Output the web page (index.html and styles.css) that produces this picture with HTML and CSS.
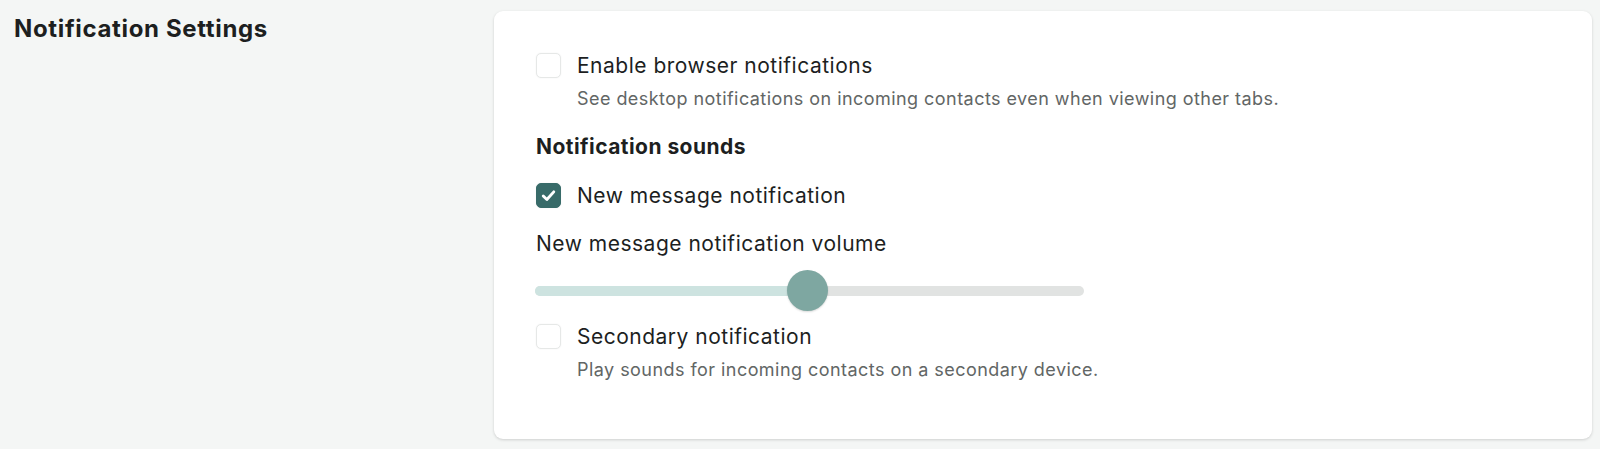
FILE: index.html
```html
<!DOCTYPE html>
<html lang="en">
<head>
  <meta charset="UTF-8">
  <meta name="viewport" content="width=device-width, initial-scale=1.0">
  <title>Notification Settings</title>
  <link rel="stylesheet" href="styles.css">
</head>
<body>
  <div class="settings">
    <h2 class="settings-title">Notification Settings</h2>

    <div class="card">
      <!-- Browser notifications -->
      <label class="option">
        <span class="checkbox"></span>
        <span class="option-label">Enable browser notifications</span>
      </label>
      <p class="hint">See desktop notifications on incoming contacts even when viewing other tabs.</p>

      <!-- Sounds -->
      <h3 class="group-title">Notification sounds</h3>
      <label class="option">
        <span class="checkbox checked">
          <svg viewBox="0 0 24 24" width="25" height="25"><polyline points="6.5,12.5 10.3,16.2 17.5,8.2" fill="none" stroke="#fff" stroke-width="3" stroke-linecap="round" stroke-linejoin="round"/></svg>
        </span>
        <span class="option-label">New message notification</span>
      </label>

      <div class="field-label">New message notification volume</div>
      <div class="slider">
        <div class="slider-track">
          <div class="slider-fill" style="width: 49.6%"></div>
        </div>
        <div class="slider-thumb" style="left: 49.6%"></div>
      </div>

      <label class="option">
        <span class="checkbox"></span>
        <span class="option-label">Secondary notification</span>
      </label>
      <p class="hint">Play sounds for incoming contacts on a secondary device.</p>
    </div>
  </div>
</body>
</html>
```

FILE: styles.css
```css
body {
  margin: 0;
  background: #f4f6f5;
  font-family: Inter, Lato, "Noto Sans", sans-serif;
  color: #1d1f1f;
}

.settings {
  display: flex;
  align-items: flex-start;
  padding: 11px 8px 10px 14px;
}

.settings-title {
  width: 480px;
  flex-shrink: 0;
  margin: 4px 0 0;
  font-size: 24px;
  line-height: 28px;
  font-weight: 700;
  letter-spacing: 0.65px;
}

.card {
  flex: 1;
  background: #fff;
  border-radius: 9px;
  box-shadow: 0 1px 3px rgba(0, 0, 0, 0.16);
  padding: 42px 42px 58px;
}

/* checkbox rows */
.option {
  display: flex;
  align-items: center;
  gap: 16px;
}

.checkbox {
  width: 25px;
  height: 25px;
  box-sizing: border-box;
  border: 1px solid #e6e8e7;
  border-radius: 5px;
  background: #fff;
  box-shadow: 0 0 2px rgba(0, 0, 0, 0.06);
  flex-shrink: 0;
}

.checkbox.checked {
  background: #386b69;
  border-color: #386b69;
  display: flex;
  align-items: center;
  justify-content: center;
}

.checkbox svg {
  display: block;
}

.option-label,
.field-label {
  font-size: 21px;
  line-height: 24px;
  letter-spacing: 0.5px;
}

.hint {
  margin: 10px 0 0 41px;
  font-size: 18px;
  line-height: 22px;
  color: #626665;
  letter-spacing: 0.45px;
}

.group-title {
  margin: 25px 0 24px;
  font-size: 21px;
  line-height: 24px;
  font-weight: 700;
  letter-spacing: 0.45px;
}

.field-label {
  margin-top: 24px;
}

/* volume slider */
.slider {
  position: relative;
  width: 549px;
  height: 41px;
  margin: 14px 0 13px -1px;
  display: flex;
  align-items: center;
}

.slider-track {
  width: 100%;
  height: 10px;
  border-radius: 5px;
  background: #e1e3e2;
  overflow: hidden;
}

.slider-fill {
  height: 100%;
  background: #cde3e0;
}

.slider-thumb {
  position: absolute;
  top: 0;
  width: 41px;
  height: 41px;
  margin-left: -20.5px;
  border-radius: 50%;
  background: #7ea7a1;
  box-shadow: 0 1px 2px rgba(0, 0, 0, 0.15);
}
```
